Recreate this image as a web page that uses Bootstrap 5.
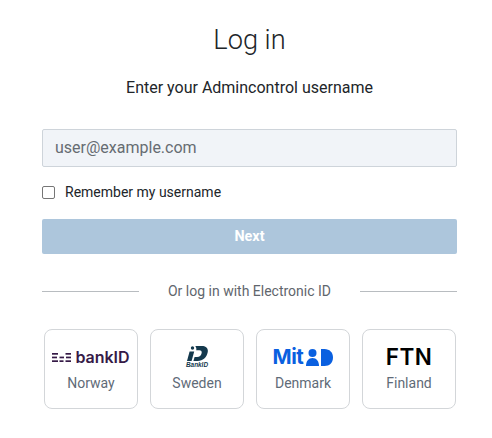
<!DOCTYPE html>
<html lang="en">
<head>
<meta charset="utf-8">
<title>Log in</title>
<link href="https://cdn.jsdelivr.net/npm/bootstrap@5.3.0/dist/css/bootstrap.min.css" rel="stylesheet">
<style>
html,body{height:100%;overflow:hidden}
body{font-family:Roboto,"Liberation Sans",sans-serif;background:#fff;color:#212529}
.login-wrap{width:415px;margin-left:42px;padding-top:21px}
.login-title{font-size:27.2px;font-weight:300;line-height:38px;margin:0 0 17px;color:#212529}
.login-sub{font-size:16px;line-height:24px;margin:0 0 29px;color:#212529}
.login-input{height:38px;background:#f1f4f8;border:1px solid #ced4da;border-radius:2px;padding:0 12px 2px;font-size:16px;color:#212529}
.login-input::placeholder{color:#666c72;opacity:1}
.login-input:focus{background:#f1f4f8}
.remember{margin:15px 0 16px;height:21px}
.remember .form-check-input{width:13px;height:13px;margin:0;border-color:#767676;border-radius:2px;flex:none}
.remember label{font-size:14px;line-height:21px;margin-left:10px;color:#212529}
.next-btn{height:35px;background:#adc6dc;border:0;border-radius:2px;color:#fff;font-size:14.4px;font-weight:700;padding:0}
.next-btn:disabled{background:#adc6dc;color:#fff;opacity:1}
.or-row{margin:28px 0 29px;height:18px;font-size:14px;color:#5f666d;gap:29px}
.or-row hr{flex:1;margin:0;border-color:#b8bcc0;opacity:1}
.eid-row{gap:12px;padding:0 1px 0 2px}
.eid-card{width:94px;height:80px;border:1px solid #d3d6d9;border-radius:8px;background:#fff;text-decoration:none;color:#5f6b78;font-size:14px;line-height:20px;padding:0}
.eid-logo{height:30px;margin-top:12px;margin-bottom:1px}
.no-text{font-family:Inter,sans-serif;font-weight:600;font-size:16px;color:#361a47;line-height:1;gap:4px}
.dk-text{font-family:Inter,sans-serif;font-weight:700;font-size:20.5px;color:#0a60e0;line-height:1;letter-spacing:-.4px;gap:3px}
.dk-word{margin-top:1px}
.fi-text{font-family:Inter,sans-serif;font-weight:600;font-size:22.5px;color:#000;line-height:1;letter-spacing:.4px}
.se-text{font-family:"Liberation Sans",sans-serif;font-weight:700;font-style:italic;font-size:6.4px;color:#14394d;line-height:1;margin-top:1px}
</style>
</head>
<body>
<main class="login-wrap">
  <h1 class="login-title text-center">Log in</h1>
  <p class="login-sub text-center">Enter your Admincontrol username</p>
  <form>
    <input class="form-control login-input" type="email" placeholder="user@example.com" aria-label="Username">
    <div class="remember d-flex align-items-center">
      <input class="form-check-input" type="checkbox" id="rememberMe">
      <label for="rememberMe">Remember my username</label>
    </div>
    <button type="button" class="btn next-btn w-100" disabled>Next</button>
  </form>
  <div class="or-row d-flex align-items-center">
    <hr>
    <span>Or log in with Electronic ID</span>
    <hr>
  </div>
  <div class="eid-row d-flex">
    <a href="#" class="eid-card d-flex flex-column align-items-center">
      <span class="eid-logo d-flex align-items-center no-text">
        <svg width="19" height="9" viewBox="0 0 19 9" fill="#361a47" aria-hidden="true">
          <rect x="0" y="0" width="6" height="1.7"/><rect x="0" y="3.6" width="5" height="1.7"/><rect x="0" y="7.300" width="6" height="1.7"/>
          <rect x="7.500" y="3.600" width="4.500" height="1.7"/><rect x="7.500" y="7.300" width="4" height="1.7"/>
          <rect x="13.500" y="0" width="5.500" height="1.7"/><rect x="14" y="3.6" width="5" height="1.7"/><rect x="13.500" y="7.300" width="5.500" height="1.7"/>
        </svg>
        <span>bankID</span>
      </span>
      <span>Norway</span>
    </a>
    <a href="#" class="eid-card d-flex flex-column align-items-center">
      <span class="eid-logo d-flex flex-column align-items-center justify-content-center">
        <svg width="21" height="15" viewBox="0 0 21 15" fill="#14394d" aria-hidden="true">
          <circle cx="5.500" cy="2" r="1.700"/>
          <path d="M2.600 5.500h4.600L4.600 15H0z"/>
          <path d="M8.500 0h6.300C19 0 21.500 2.400 20.700 6.200 19.800 11 16 15 10.500 15H6.400l1.200-4h2.500c2.500 0 4-1.600 4.500-3.800.4-1.900-.4-3-2.200-3H9.200c.4-1.300.1-2.600-.7-3.600z"/>
        </svg>
        <span class="se-text">BankID</span>
      </span>
      <span>Sweden</span>
    </a>
    <a href="#" class="eid-card d-flex flex-column align-items-center">
      <span class="eid-logo d-flex align-items-center dk-text">
        <span class="dk-word">Mit</span>
        <svg width="27" height="17" viewBox="0 0 27 17" fill="#0a60e0" aria-hidden="true">
          <circle cx="6.500" cy="4" r="4"/>
          <path d="M0 17c0-5 2.600-8 6.500-8s6.500 3 6.500 8z"/>
          <path d="M15 0h3.500C23.600 0 27 3.500 27 8.500S23.600 17 18.500 17H15z"/>
        </svg>
      </span>
      <span>Denmark</span>
    </a>
    <a href="#" class="eid-card d-flex flex-column align-items-center">
      <span class="eid-logo d-flex align-items-center fi-text">FTN</span>
      <span>Finland</span>
    </a>
  </div>
</main>
<script src="https://cdn.jsdelivr.net/npm/bootstrap@5.3.0/dist/js/bootstrap.bundle.min.js"></script>
</body>
</html>
